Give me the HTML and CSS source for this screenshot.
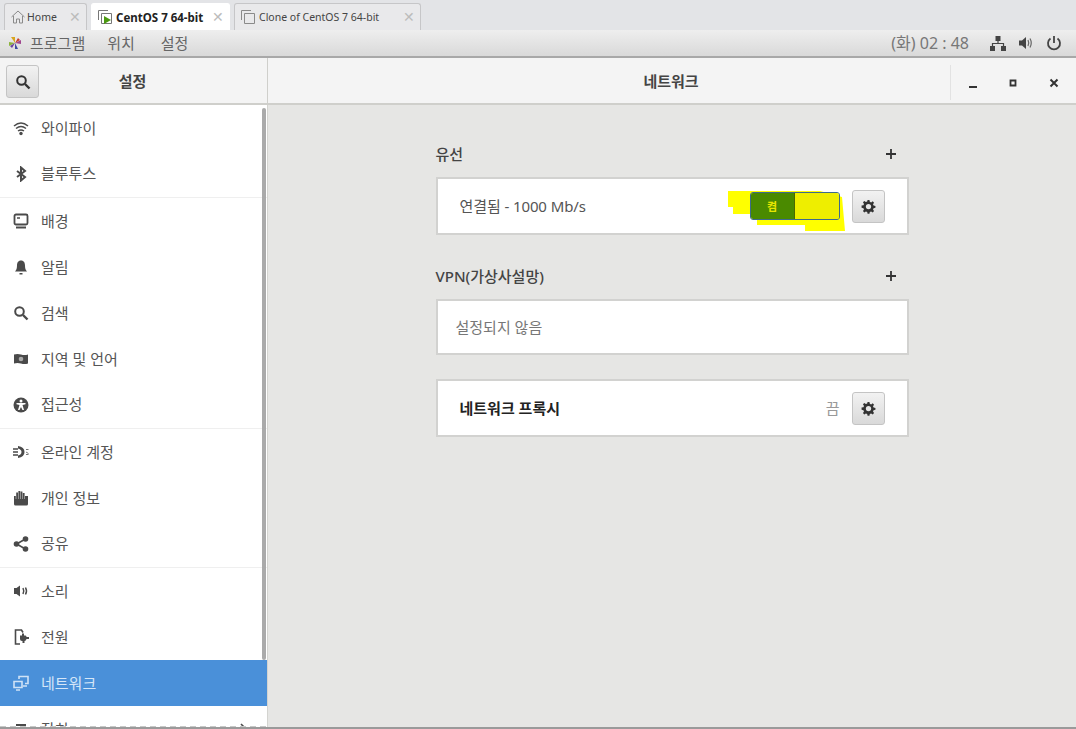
FILE: index.html
```html
<!DOCTYPE html>
<html lang="ko">
<head>
  <meta charset="UTF-8">
  <title>네트워크</title>
  <link rel="stylesheet" href="styles.css">
</head>
<body>

  <div class="tabbar">
    <div class="tab tab-home">
      <svg class="tab-icon" viewBox="0 0 16 16"><path d="M1.500 8 8 2l6.500 6M3.500 7v7h3v-4h3v4h3V7" fill="none" stroke="#8a8a8a" stroke-width="1"/></svg>
      <span class="tab-name">Home</span>
      <span class="tab-close">✕</span>
    </div>
    <div class="tab tab-active">
      <svg class="tab-icon" viewBox="0 0 16 16"><path d="M1.500 11V1.500H11M4.500 4.500h10v10h-10z" fill="#fff" stroke="#777" stroke-width="1"/><path d="M7 7l7 4-7 4z" fill="#4c9a12"/></svg>
      <span class="tab-name">CentOS 7 64-bit</span>
      <span class="tab-close">✕</span>
    </div>
    <div class="tab tab-clone">
      <svg class="tab-icon" viewBox="0 0 16 16"><path d="M1.500 11V1.500H11M4.500 4.500h10v10h-10z" fill="none" stroke="#8a8a8a" stroke-width="1"/></svg>
      <span class="tab-name">Clone of CentOS 7 64-bit</span>
      <span class="tab-close">✕</span>
    </div>
  </div>

  <div class="panel">
    <svg class="panel-logo" viewBox="0 0 14 14">
      <path d="M7 7 3 1h4z" fill="#d9a520"/><path d="M7 7l6-3v4z" fill="#a0478f"/>
      <path d="M7 7l3 6H7z" fill="#3c4aa0"/><path d="M7 7 1 10V6z" fill="#8db33c"/>
      <path d="M7 7l3-5 2 2z" fill="#c8402a"/><path d="M7 7 4 12l-2-2z" fill="#6a3fa0"/>
    </svg>
    <span class="panel-menu">프로그램</span>
    <span class="panel-menu">위치</span>
    <span class="panel-menu panel-last">설정</span>
    <span class="panel-clock">(화) 02 : 48</span>
    <svg class="panel-icon" viewBox="0 0 16 16"><path d="M5.500 1h5v5h-5zM0 11h5v5H0zM11 11h5v5h-5z" fill="#444"/><path d="M8 6v2.500M2.500 11V8.500h11V11" fill="none" stroke="#444" stroke-width="1.200"/></svg>
    <svg class="panel-icon" viewBox="0 0 16 16"><path d="M1 5.500h3L8 2v12l-4-3.500H1z" fill="#444"/><path d="M10 5q1.500 3 0 6M12 3.500q2.500 4.500 0 9" fill="none" stroke="#666" stroke-width="1.200"/></svg>
    <svg class="panel-icon" viewBox="0 0 16 16"><path d="M8 1v7" stroke="#444" stroke-width="1.800" fill="none"/><path d="M4.500 3.500a6 6 0 1 0 7 0" stroke="#444" stroke-width="1.800" fill="none"/></svg>
  </div>

  <div class="titlebar">
    <div class="title-left">
      <button class="tool-btn">
        <svg class="icon" viewBox="0 0 16 16"><circle cx="6.500" cy="6.500" r="4.300" fill="none" stroke="#333" stroke-width="2"/><path d="M10 10l4.500 4.500" stroke="#333" stroke-width="2.400"/></svg>
      </button>
      <span class="title-text">설정</span>
    </div>
    <div class="title-right">
      <span class="title-text">네트워크</span>
      <div class="win-btns">
        <svg class="win-btn" viewBox="0 0 10 16"><path d="M1 12h8" stroke="#333" stroke-width="2"/></svg>
        <svg class="win-btn" viewBox="0 0 10 16"><path d="M2.500 5.500h5v5h-5z" fill="none" stroke="#333" stroke-width="1.800"/></svg>
        <svg class="win-btn" viewBox="0 0 10 16"><path d="M1.500 4.500l7 7M8.500 4.500l-7 7" stroke="#333" stroke-width="2"/></svg>
      </div>
    </div>
  </div>

  <div class="content">
    <div class="sidebar">
      <div class="side-row">
        <svg class="icon" viewBox="0 0 16 16"><path d="M1 6q7-6 14 0M3 8.500q5-4 10 0M5 11q3-2 6 0" fill="none" stroke="#4a4a4a" stroke-width="1.500"/><circle cx="8" cy="13.500" r="1.700" fill="#4a4a4a"/></svg>
        <span>와이파이</span>
      </div>
      <div class="side-row side-end">
        <svg class="icon" viewBox="0 0 16 16"><path d="M4 5l8 6-4 3.500v-13L12 5l-8 6" fill="none" stroke="#4a4a4a" stroke-width="2"/></svg>
        <span>블루투스</span>
      </div>
      <div class="side-row">
        <svg class="icon" viewBox="0 0 16 16"><rect x="1.500" y="1.500" width="13" height="10" rx="1.500" fill="#fff" stroke="#4a4a4a" stroke-width="1.800"/><path d="M4 4h3v2H4z" fill="#777"/><path d="M3 13.500h10v2H3z" fill="#4a4a4a"/></svg>
        <span>배경</span>
      </div>
      <div class="side-row">
        <svg class="icon" viewBox="0 0 16 16"><path d="M8 1.500c3 0 4 2.500 4 5s.5 4.500 2 6H2c1.500-1.500 2-3.500 2-6s1-5 4-5z" fill="#4a4a4a"/><path d="M6.500 14h3v1.500h-3z" fill="#4a4a4a"/></svg>
        <span>알림</span>
      </div>
      <div class="side-row">
        <svg class="icon" viewBox="0 0 16 16"><circle cx="6.500" cy="6.500" r="4.300" fill="none" stroke="#4a4a4a" stroke-width="2"/><path d="M10 10l4.500 4.500" stroke="#4a4a4a" stroke-width="2.400"/></svg>
        <span>검색</span>
      </div>
      <div class="side-row">
        <svg class="icon" viewBox="0 0 16 16"><path d="M1 3.500q3.500-1 7 0t7 0v9q-3.500 1-7 0t-7 0z" fill="#4a4a4a"/><circle cx="8" cy="8" r="2.300" fill="#aaa"/></svg>
        <span>지역 및 언어</span>
      </div>
      <div class="side-row side-end">
        <svg class="icon" viewBox="0 0 16 16"><circle cx="8" cy="8" r="7.500" fill="#4a4a4a"/><circle cx="8" cy="4" r="1.500" fill="#fff"/><path d="M3.500 6h9v1.300L9.500 8l1.500 5H9.500L8 10l-1.500 3H5l1.500-5-3-.7z" fill="#fff"/></svg>
        <span>접근성</span>
      </div>
      <div class="side-row">
        <svg class="icon" viewBox="0 0 16 16"><path d="M0 5h5M0 8h5M0 11h5" stroke="#4a4a4a" stroke-width="1.400"/><path d="M5 2q6.500 1 6.500 6T5 14v-2.500q3.500-1 3.500-3.500T5 4.500z" fill="#4a4a4a"/><path d="M13 5.500h2.500M13 8l2.500 1.500M13 10.500h2.500" stroke="#777" stroke-width="1"/></svg>
        <span>온라인 계정</span>
      </div>
      <div class="side-row">
        <svg class="icon" viewBox="0 0 16 16"><path d="M1 6h1.800v3h.4V2.500H5V9h.4V1h1.800v8h.4V1.500h1.800V9h.4V3h1.800v6h.4V6H15v8q0 1.500-1.500 1.500h-11Q1 15.500 1 14z" fill="#4a4a4a"/></svg>
        <span>개인 정보</span>
      </div>
      <div class="side-row side-end">
        <svg class="icon" viewBox="0 0 16 16"><circle cx="3.500" cy="8" r="2.800" fill="#4a4a4a"/><circle cx="12.500" cy="3" r="2.800" fill="#4a4a4a"/><circle cx="12.500" cy="13" r="2.800" fill="#4a4a4a"/><path d="M12.500 3l-9 5 9 5" fill="none" stroke="#4a4a4a" stroke-width="1.600"/></svg>
        <span>공유</span>
      </div>
      <div class="side-row">
        <svg class="icon" viewBox="0 0 16 16"><path d="M1 5h2.500L7 2.500v11L3.500 11H1z" fill="#4a4a4a"/><path d="M10 5q1.500 3 0 6M12.500 4.500q2 3.500 0 7" fill="none" stroke="#4a4a4a" stroke-width="1.500"/></svg>
        <span>소리</span>
      </div>
      <div class="side-row">
        <svg class="icon" viewBox="0 0 16 16"><path d="M10 3.500 8.500 1h-6v14H7" fill="none" stroke="#4a4a4a" stroke-width="1.600"/><path d="M7 6.500h2V4.500h2v2h1.500q1 0 1 1.500H16v2h-2.500q-.5 2-2 2v2h-2v-2H9Q7 12 7 10z" fill="#4a4a4a"/></svg>
        <span>전원</span>
      </div>
      <div class="side-row side-selected">
        <svg class="icon" viewBox="0 0 16 16"><path d="M1 6.500h8v6H1zM3 15h4" fill="none" stroke="#cfe2f6" stroke-width="1.600"/><path d="M6 4V1.500h9v7h-3M10 11h4" fill="none" stroke="#cfe2f6" stroke-width="1.600"/></svg>
        <span>네트워크</span>
      </div>
      <div class="side-row">
        <svg class="icon" viewBox="0 0 16 16"><path d="M3 3h10v9H3z" fill="#4a4a4a"/></svg>
        <span>장치</span>
        <svg class="side-chevron" viewBox="0 0 8 12"><path d="M2 1l5 5-5 5" fill="none" stroke="#4a4a4a" stroke-width="1.600"/></svg>
      </div>
      <div class="scrollbar"></div>
      <div class="side-fade"></div>
    </div>

    <div class="main">
      <div class="main-column">
        <div class="group-head">
          <span>유선</span>
          <svg class="plus" viewBox="0 0 10 10"><path d="M5 0v10M0 5h10" stroke="#333" stroke-width="1.800"/></svg>
        </div>
        <div class="frame frame-wired">
          <span class="frame-text">연결됨 - 1000 Mb/s</span>
          <div class="switch-wrap">
            <svg class="marker" viewBox="0 0 118 41"><path d="M0 0H92L114 6 117 40H77V34H29V23H5V16H0z" fill="#ffff00"/></svg>
            <div class="switch">
              <span class="switch-on">켬</span>
              <span class="switch-off"></span>
            </div>
          </div>
          <button class="tool-btn gear-btn">
            <svg class="icon" viewBox="0 0 16 16"><path d="M7 1h2l.4 2 1.400.6 1.700-1.100 1.400 1.400-1.100 1.700.6 1.400 2 .4v2l-2 .4-.6 1.400 1.100 1.700-1.400 1.400-1.700-1.100-1.400.6-.4 2H7l-.4-2-1.400-.6-1.700 1.100-1.400-1.400 1.100-1.700-.6-1.400-2-.4V7l2-.4.6-1.400-1.100-1.700 1.400-1.400 1.700 1.100 1.400-.6z" fill="#333"/><circle cx="8" cy="8" r="2.800" fill="#e6e6e6"/></svg>
          </button>
        </div>

        <div class="group-head group-vpn">
          <span>VPN(가상사설망)</span>
          <svg class="plus" viewBox="0 0 10 10"><path d="M5 0v10M0 5h10" stroke="#333" stroke-width="1.800"/></svg>
        </div>
        <div class="frame frame-vpn">
          <span class="frame-muted">설정되지 않음</span>
        </div>

        <div class="frame frame-proxy">
          <span class="frame-title">네트워크 프록시</span>
          <span class="frame-state">끔</span>
          <button class="tool-btn gear-btn">
            <svg class="icon" viewBox="0 0 16 16"><path d="M7 1h2l.4 2 1.400.6 1.700-1.100 1.400 1.400-1.100 1.700.6 1.400 2 .4v2l-2 .4-.6 1.400 1.100 1.700-1.400 1.400-1.700-1.100-1.400.6-.4 2H7l-.4-2-1.400-.6-1.700 1.100-1.400-1.400 1.100-1.700-.6-1.400-2-.4V7l2-.4.6-1.400-1.100-1.700 1.400-1.400 1.700 1.100 1.400-.6z" fill="#333"/><circle cx="8" cy="8" r="2.800" fill="#e6e6e6"/></svg>
          </button>
        </div>
      </div>
    </div>
  </div>

</body>
</html>
```

FILE: styles.css
```css
* {
  box-sizing: border-box;
}

html, body {
  height: 100%;
}

body {
  margin: 0;
  width: 1076px;
  height: 729px;
  overflow: hidden;
  display: flex;
  flex-direction: column;
  font-family: "Noto Sans", "Noto Sans CJK KR", sans-serif;
  font-size: 15px;
  color: #555;
  background-color: #e6e6e4;
}

/* browser tabs */
.tabbar {
  height: 30px;
  flex: none;
  display: flex;
  align-items: flex-end;
  gap: 4px;
  padding-left: 4px;
  background-color: #e3e4e7;
}

.tab {
  height: 27px;
  display: flex;
  align-items: center;
  padding: 0 5px;
  border: 1px solid #c6c6c8;
  border-bottom: none;
  border-radius: 3px 3px 0 0;
  background-color: #e9e9eb;
  font-size: 10.5px;
  color: #444;
}

.tab-home {
  width: 83px;
}

.tab-active {
  width: 139px;
  background-color: #fff;
  border-color: #fff;
  font-size: 11.5px;
  font-weight: 700;
  color: #222;
}

.tab-clone {
  width: 187px;
}

.tab-icon {
  width: 16px;
  height: 16px;
  flex: none;
  margin-right: 1px;
}

.tab-active .tab-icon {
  margin-right: 3px;
}

.tab-clone .tab-icon {
  margin-right: 3px;
}

.tab-close {
  margin-left: auto;
  font-size: 14px;
  line-height: 14px;
  font-weight: 400;
  color: #bcbcbc;
}

/* gnome top panel */
.panel {
  height: 28px;
  flex: none;
  display: flex;
  align-items: center;
  padding-left: 8px;
  padding-right: 14px;
  background: linear-gradient(#eeeeee, #d9d9d9);
  border-bottom: 2px solid #a8a8a8;
  color: #666;
}

.panel-logo {
  width: 14px;
  height: 14px;
  margin-right: 8px;
}

.panel-menu {
  margin-right: 22px;
  padding-bottom: 2px;
}

.panel-last {
  margin-left: 4px;
}

.panel-clock {
  margin-left: auto;
  margin-right: 9px;
  padding-bottom: 2px;
  font-size: 16px;
  color: #777;
}

.panel-icon {
  width: 16px;
  height: 16px;
  margin-left: 12px;
}

/* window title */
.titlebar {
  height: 47px;
  flex: none;
  display: flex;
  background-color: #f4f4f4;
  border-bottom: 2px solid #cfcfcb;
  font-weight: 700;
  color: #444;
}

.title-left {
  width: 268px;
  flex: none;
  position: relative;
  display: flex;
  align-items: center;
  justify-content: center;
  padding-right: 2px;
  border-right: 1px solid #cfcfcb;
}

.title-left .tool-btn {
  position: absolute;
  left: 6px;
  top: 7px;
}

.title-right {
  flex: 1;
  position: relative;
  display: flex;
  align-items: center;
  justify-content: center;
  padding-right: 2px;
}

.win-btns {
  position: absolute;
  right: 0;
  top: 7px;
  height: 35px;
  width: 126px;
  display: flex;
  align-items: center;
  justify-content: space-around;
  padding: 0 2px;
  border-left: 1px solid #e2e2e2;
}

.win-btn {
  width: 10px;
  height: 16px;
}

.tool-btn {
  width: 33px;
  height: 33px;
  padding: 0;
  flex: none;
  display: flex;
  align-items: center;
  justify-content: center;
  background: linear-gradient(#f2f2f2, #d9d9d9);
  border: 1px solid #c4c4c4;
  border-radius: 3px;
}

.icon {
  width: 16px;
  height: 16px;
  flex: none;
}

/* sidebar + main */
.content {
  flex: 1;
  min-height: 0;
  display: flex;
  border-bottom: 2px solid #9a9a9a;
}

.sidebar {
  width: 267px;
  flex: none;
  position: relative;
  overflow: hidden;
  background-color: #fff;
}

.side-row {
  height: 46px;
  display: flex;
  align-items: center;
  gap: 12px;
  padding-left: 13px;
  color: #555;
}

.side-row span {
  padding-bottom: 2px;
}

.side-end {
  height: 47px;
  padding-bottom: 1px;
  border-bottom: 1px solid #efefef;
}

.side-selected {
  background-color: #4a90d9;
  color: #d5e6f8;
}

.side-chevron {
  width: 8px;
  height: 12px;
  margin-left: auto;
  margin-right: 20px;
}

.scrollbar {
  position: absolute;
  left: 262px;
  top: 3px;
  width: 4px;
  height: 552px;
  border-radius: 2px;
  background-color: #aaaaaa;
}

.side-fade {
  position: absolute;
  left: 0;
  right: 0;
  bottom: 0;
  height: 1px;
  background: repeating-linear-gradient(90deg, #c8c8c8 0 6px, #fff 6px 10px);
}

.main {
  flex: 1;
  display: flex;
  justify-content: center;
  border-left: 1px solid #d4d4d0;
}

.main-column {
  width: 473px;
  padding-top: 37px;
}

.group-head {
  height: 22px;
  display: flex;
  align-items: center;
  justify-content: space-between;
  padding-right: 13px;
  font-weight: 500;
  color: #444;
}

.group-vpn {
  margin-top: 29px;
}

.plus {
  width: 10px;
  height: 10px;
  margin-top: 2px;
}

.frame {
  margin-top: 13px;
  display: flex;
  align-items: center;
  padding: 0 22px;
  background-color: #fff;
  border: 2px solid #d2d2d0;
}

.frame > span {
  padding-bottom: 2px;
}

.frame-wired {
  height: 58px;
}

.frame-vpn {
  height: 56px;
  padding-left: 18px;
}

.frame-proxy {
  height: 58px;
  margin-top: 24px;
}

.frame-text {
  color: #555;
  letter-spacing: -0.1px;
}

.frame-muted {
  color: #777;
}

.frame-title {
  font-weight: 700;
  color: #222;
}

.frame-state {
  margin-left: auto;
  color: #999;
}

.gear-btn {
  margin-left: 12px;
}

.gear-btn .icon {
  width: 15px;
  height: 15px;
}

/* switch with the yellow marker scribbled over it */
.switch-wrap {
  margin-left: auto;
  position: relative;
}

.marker {
  position: absolute;
  left: -22px;
  top: -1px;
  width: 118px;
  height: 41px;
}

.switch {
  position: relative;
  width: 90px;
  height: 28px;
  display: flex;
  border: 1px solid #3d6a8c;
  border-radius: 3px;
  overflow: hidden;
  font-size: 11px;
  font-weight: 700;
}

.switch-on {
  width: 43px;
  display: flex;
  align-items: center;
  justify-content: center;
  background-color: #4a8a00;
  color: #e6e600;
}

.switch-off {
  flex: 1;
  background-color: #eeee00;
  border-left: 1px solid #4a6a00;
}
```
